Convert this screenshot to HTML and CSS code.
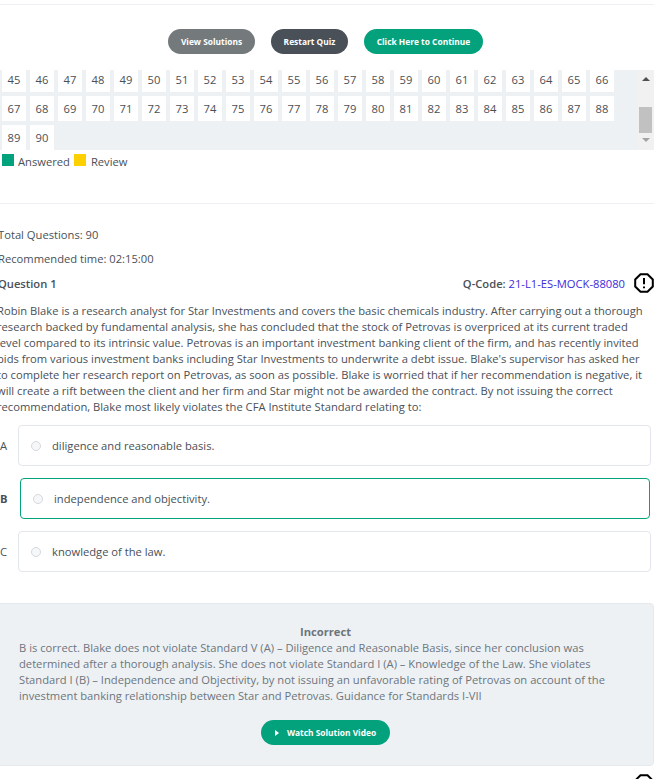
FILE: index.html
```html
<!DOCTYPE html>
<html lang="en">
<head>
    <meta charset="UTF-8">
    <meta name="viewport" content="width=device-width, initial-scale=1.0">
    <title>Quiz Review</title>
    <link rel="stylesheet" href="styles.css">
</head>
<body>
<main class="container">
    <div class="actions">
        <a href="#" class="btn btn-grey">View Solutions</a>
        <a href="#" class="btn btn-dark">Restart Quiz</a>
        <a href="#" class="btn btn-green">Click Here to Continue</a>
    </div>

    <section class="palette">
        <div class="palette-list">
            <div class="palette-grid" id="palette-grid"></div>
        </div>
        <div class="scrollbar">
            <span class="arrow-up"></span>
            <span class="thumb"></span>
            <span class="arrow-down"></span>
        </div>
    </section>

    <div class="legend">
        <span class="swatch swatch-green"></span>
        <span class="legend-label">Answered</span>
        <span class="swatch swatch-yellow"></span>
        <span class="legend-label legend-review">Review</span>
    </div>

    <section class="question">
        <p class="meta">Total Questions: 90</p>
        <p class="meta">Recommended time: 02:15:00</p>
        <div class="question-head">
            <strong>Question 1</strong>
            <span class="qcode"><strong>Q-Code:</strong> <a href="#">21-L1-ES-MOCK-88080</a></span>
            <svg class="alert-icon" viewBox="0 0 20 20" width="20" height="20">
                <path d="M6.5 1.2h7l5.3 5.3v7l-5.3 5.3h-7l-5.3-5.3v-7z" fill="none" stroke="#000" stroke-width="2"/>
                <path d="M10 5v6.2M10 13.6v1.6" fill="none" stroke="#000" stroke-width="2"/>
            </svg>
        </div>
        <p class="stem">Robin Blake is a research analyst for Star Investments and covers the basic chemicals industry. After carrying out a thorough research backed by fundamental analysis, she has concluded that the stock of Petrovas is overpriced at its current traded level compared to its intrinsic value. Petrovas is an important investment banking client of the firm, and has recently invited bids from various investment banks including Star Investments to underwrite a debt issue. Blake's supervisor has asked her to complete her research report on Petrovas, as soon as possible. Blake is worried that if her recommendation is negative, it will create a rift between the client and her firm and Star might not be awarded the contract. By not issuing the correct recommendation, Blake most likely violates the CFA Institute Standard relating to:</p>
    </section>

    <section class="options">
        <div class="option">
            <span class="option-key">A</span>
            <label class="option-box"><span class="radio"></span>diligence and reasonable basis.</label>
        </div>
        <div class="option option-picked">
            <span class="option-key">B</span>
            <label class="option-box"><span class="radio"></span>independence and objectivity.</label>
        </div>
        <div class="option">
            <span class="option-key">C</span>
            <label class="option-box"><span class="radio"></span>knowledge of the law.</label>
        </div>
    </section>

    <section class="feedback">
        <h4>Incorrect</h4>
        <p>B is correct. Blake does not violate Standard V (A) – Diligence and Reasonable Basis, since her conclusion was determined after a thorough analysis. She does not violate Standard I (A) – Knowledge of the Law. She violates Standard I (B) – Independence and Objectivity, by not issuing an unfavorable rating of Petrovas on account of the investment banking relationship between Star and Petrovas. Guidance for Standards I-VII</p>
        <a href="#" class="btn btn-green btn-video"><span class="play"></span>Watch Solution Video</a>
    </section>

    <div class="next-flag">
        <svg class="alert-icon" viewBox="0 0 20 20" width="20" height="20">
            <path d="M6.5 1.2h7l5.3 5.3v7l-5.3 5.3h-7l-5.3-5.3v-7z" fill="none" stroke="#000" stroke-width="2"/>
        </svg>
    </div>
</main>

<script>
    // question numbers for the palette
    let grid = document.getElementById('palette-grid');
    for (let i = 45; i <= 90; i++) {
        let cell = document.createElement('span');
        cell.className = 'cell';
        cell.textContent = i;
        grid.appendChild(cell);
    }
</script>
</body>
</html>
```

FILE: styles.css
```css
html, body {
    height: 779px;
    overflow: hidden;
}

body {
    font-family: "Open Sans", Arial, sans-serif;
    font-size: 11.2px;
    margin: 0;
    padding: 0;
    background: #ffffff;
    color: #495057;
}

.container {
    width: 654px;
    margin-top: 4px;
    border-top: 1px solid #eef0f3;
}

.actions {
    display: flex;
    justify-content: center;
    gap: 16px;
    margin-top: 24px;
    padding-right: 3px;
}

.btn {
    display: flex;
    align-items: center;
    justify-content: center;
    height: 25px;
    border-radius: 13px;
    color: #ffffff;
    font-size: 8.4px;
    font-weight: 700;
    text-decoration: none;
}

.btn-grey {
    width: 87px;
    background: #747a7c;
}

.btn-dark {
    width: 77px;
    background: #495057;
}

.btn-green {
    width: 119px;
    background: #04a27c;
}

.palette {
    display: flex;
    height: 80px;
    margin-top: 16px;
    background: #eef1f4;
    overflow: hidden;
}

.palette-list {
    flex: 1;
    padding-left: 2px;
}

.palette-grid {
    display: grid;
    grid-template-columns: repeat(22, 24px);
    grid-auto-rows: 25px;
    gap: 4px;
    margin-top: -3px;
}

.cell {
    display: flex;
    align-items: center;
    justify-content: center;
    background: #ffffff;
}

.scrollbar {
    display: flex;
    flex-direction: column;
    align-items: center;
    width: 16px;
    background: #f1f1f1;
}

.arrow-up {
    margin-top: 7px;
    border-left: 4px solid transparent;
    border-right: 4px solid transparent;
    border-bottom: 4px solid #505050;
}

.thumb {
    align-self: flex-start;
    width: 13px;
    height: 26px;
    margin: 26px 0 0 1px;
    background: #c1c1c1;
}

.arrow-down {
    margin-top: 5px;
    border-left: 4px solid transparent;
    border-right: 4px solid transparent;
    border-top: 4px solid #a3a3a3;
}

.legend {
    display: flex;
    align-items: center;
    height: 12px;
    margin-top: 4px;
    padding-bottom: 37px;
    padding-left: 2px;
    border-bottom: 1px solid #eef0f3;
}

.swatch {
    width: 12px;
    height: 12px;
}

.swatch-green {
    background: #04a27c;
}

.swatch-yellow {
    background: #ffd000;
}

.legend-label {
    margin: 2px 4px 0;
}

.legend-review {
    margin-left: 5px;
}

.question {
    margin-left: -2px;
    margin-top: 23px;
}

.meta {
    margin: 0;
    line-height: 16px;
    margin-bottom: 8px;
}

.question-head {
    display: flex;
    align-items: center;
    height: 16px;
}

.question-head strong {
    font-weight: 600;
}

.qcode {
    margin-left: auto;
    margin-right: 9px;
}

.qcode a {
    color: #3a2bdb;
    text-decoration: none;
}

.alert-icon {
    display: block;
}

.stem {
    margin: 12px 6px 0 -1px;
    line-height: 16px;
}

.options {
    margin-top: 10px;
    display: flex;
    flex-direction: column;
    gap: 12px;
}

.option {
    display: flex;
    align-items: center;
}

.option-key {
    width: 18px;
}

.option-box {
    display: flex;
    align-items: center;
    flex: none;
    width: 633px;
    height: 41px;
    box-sizing: border-box;
    border: 1px solid #e4e6ed;
    border-radius: 4px;
    padding-left: 12px;
}

.option-picked .option-key {
    width: 20px;
    font-weight: 700;
}

.option-picked .option-box {
    width: 630px;
    border-color: #04a27c;
}

.radio {
    width: 10px;
    height: 10px;
    margin-right: 11px;
    box-sizing: border-box;
    border: 1px solid #d5d8dd;
    border-radius: 50%;
    background: #f6f7f8;
}

.feedback {
    margin: 31px 0 0 -3px;
    height: 163px;
    box-sizing: border-box;
    padding: 20px 21px 0 21px;
    background: #eef1f4;
    border: 1px solid #e6e9ec;
    border-radius: 4px;
    color: #6c757d;
    line-height: 16px;
}

.feedback h4 {
    margin: 0;
    font-size: 11.2px;
    font-weight: 700;
    text-align: center;
}

.feedback p {
    margin: 0;
}

.btn-video {
    width: 129px;
    margin: 16px auto 0;
}

.play {
    width: 0;
    height: 0;
    margin-right: 8px;
    border-top: 3px solid transparent;
    border-bottom: 3px solid transparent;
    border-left: 4px solid #ffffff;
}

.next-flag {
    display: flex;
    justify-content: flex-end;
    margin-top: 8px;
}
```
